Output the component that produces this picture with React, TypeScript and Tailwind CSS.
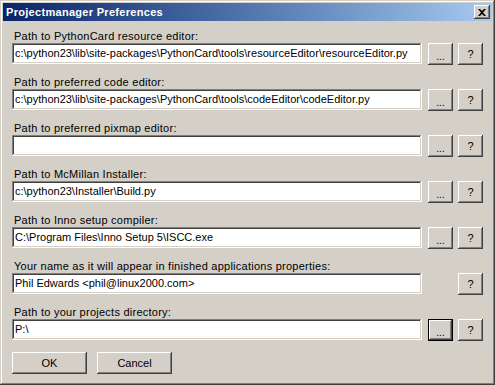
import React from 'react';

const raised =
  'shadow-[inset_-1px_-1px_#404040,inset_1px_1px_#ffffff,inset_-2px_-2px_#808080,inset_2px_2px_#d4d0c8]';
const sunken =
  'shadow-[inset_-1px_-1px_#ffffff,inset_1px_1px_#808080,inset_-2px_-2px_#d4d0c8,inset_2px_2px_#404040]';

type Row = { label: string; value: string; browse: boolean; focused?: boolean };

const rows: Row[] = [
  {
    label: 'Path to PythonCard resource editor:',
    value: 'c:\\python23\\lib\\site-packages\\PythonCard\\tools\\resourceEditor\\resourceEditor.py',
    browse: true,
  },
  {
    label: 'Path to preferred code editor:',
    value: 'c:\\python23\\lib\\site-packages\\PythonCard\\tools\\codeEditor\\codeEditor.py',
    browse: true,
  },
  { label: 'Path to preferred pixmap editor:', value: '', browse: true },
  { label: 'Path to McMillan Installer:', value: 'c:\\python23\\Installer\\Build.py', browse: true },
  { label: 'Path to Inno setup compiler:', value: 'C:\\Program Files\\Inno Setup 5\\ISCC.exe', browse: true },
  {
    label: 'Your name as it will appear in finished applications properties:',
    value: 'Phil Edwards <phil@linux2000.com>',
    browse: false,
  },
  { label: 'Path to your projects directory:', value: 'P:\\', browse: true, focused: true },
];

function Btn({ children, focused, className = '' }: { children: React.ReactNode; focused?: boolean; className?: string }) {
  return (
    <div
      className={`flex items-center justify-center bg-[#d4d0c8] text-black ${
        focused
          ? 'border border-black shadow-[inset_-1px_-1px_#404040,inset_1px_1px_#ffffff,inset_-2px_-2px_#808080]'
          : raised
      } ${className}`}
    >
      {children}
    </div>
  );
}

export default function App() {
  return (
    <div
      className="w-[495px] h-[385px] bg-[#d4d0c8] flex flex-col p-[3px] text-[11px] text-black shadow-[inset_-1px_-1px_#404040,inset_1px_1px_#d4d0c8,inset_-2px_-2px_#808080,inset_2px_2px_#ffffff]"
      style={{ fontFamily: '"Liberation Sans", Arial, sans-serif' }}
    >
      <div className="h-[18px] flex items-center justify-between pl-[3px] pr-[2px] bg-gradient-to-r from-[#0a246a] to-[#a6caf0]">
        <span className="text-white font-bold text-[11px] tracking-[0.3px]">Projectmanager Preferences</span>
        <Btn className="w-[16px] h-[14px]">
          <svg width="8" height="7" viewBox="0 0 8 7">
            <path d="M0 0h2l2 2 2-2h2L5 3.5 8 7H6L4 5 2 7H0l3-3.5z" fill="#000" />
          </svg>
        </Btn>
      </div>

      <div className="flex flex-col pl-[9px] pt-[8px]">
        {rows.map((r) => (
          <div key={r.label} className="flex flex-col h-[46px]">
            <div className="h-[14px] leading-[14px] pl-[2px] tracking-[0.25px]">{r.label}</div>
            <div className="flex items-start">
              <div className={`w-[410px] h-[21px] bg-white ${sunken} flex items-center pl-[3px] overflow-hidden whitespace-nowrap`}>
                {r.value}
              </div>
              {r.browse ? (
                <Btn focused={r.focused} className="w-[25px] h-[22px] ml-[6px] pt-[4px]">
                  <span className="text-[10px]">...</span>
                </Btn>
              ) : (
                <div className="w-[25px] ml-[6px]" />
              )}
              <Btn className="w-[25px] h-[22px] ml-[5px]">?</Btn>
            </div>
          </div>
        ))}
      </div>

      <div className="flex gap-[10px] pl-[9px] mt-[1px]">
        <Btn className="w-[75px] h-[22px]">OK</Btn>
        <Btn className="w-[75px] h-[22px]">Cancel</Btn>
      </div>
    </div>
  );
}
